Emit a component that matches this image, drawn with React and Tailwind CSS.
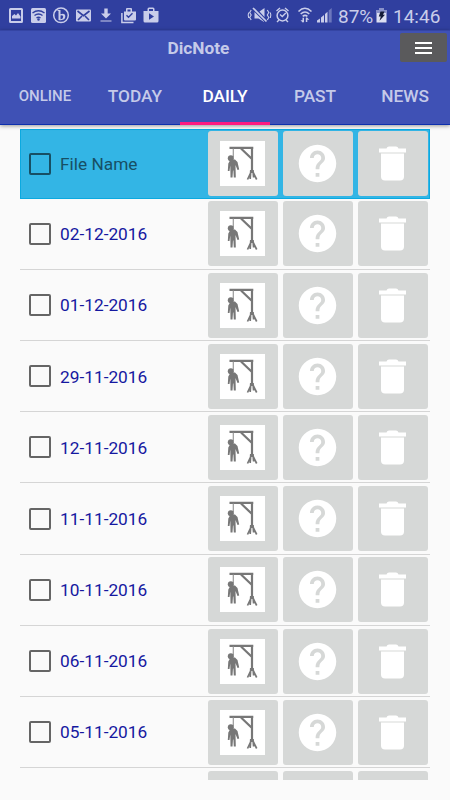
const dates = ['02-12-2016', '01-12-2016', '29-11-2016', '12-11-2016', '11-11-2016', '10-11-2016', '06-11-2016', '05-11-2016'];

function StatusIcons() {
  return (
    <svg className="block shrink-0" width="170" height="30" viewBox="0 0 170 30" fill="#c9cdea">
      <path fillRule="evenodd" d="M10.5 8h11q1.5 0 1.5 1.5v12q0 1.500-1.500 1.500h-11q-1.500 0-1.500-1.500v-12q0-1.500 1.500-1.500zM11 10v11h10v-11z" />
      <path d="M12 18.500v-2.500l2.500-2 1.500 1.500 2-2.500 2.500 3.500v2z" />
      <rect x="31" y="8" width="15" height="15" rx="1.500" />
      <g fill="none" stroke="#303f9f" strokeWidth="1.400">
        <path d="M32.500 13q6-4.500 12 0M34.500 15.500q4-3 8 0M36.500 18q2-1.500 4 0" />
      </g>
      <circle cx="38.500" cy="19.500" r="1.200" fill="#303f9f" />
      <circle cx="61" cy="15.300" r="7.300" fill="none" stroke="#c9cdea" strokeWidth="1.500" />
      <path fillRule="evenodd" d="M57.500 10h3v4.300q4.800-1.600 4.800 2.300 0 4.400-6.800 3.400v-9h-1zM60.500 15.500v3.700q2.700.2 2.700-2.400 0-2.200-2.700-1.300z" />
      <rect x="76" y="9.500" width="15" height="12" rx="1" />
      <path d="M77.500 11l6 4.700 6-4.700M78 20l4-4M89 20l-4-4" fill="none" stroke="#303f9f" strokeWidth="1.600" />
      <path d="M104.300 8.500h3.400v5h3.300l-5 5-5-5h3.300z" />
      <rect x="100.500" y="20" width="11" height="2" opacity=".5" />
      <path fillRule="evenodd" d="M124 11.500h2v-2.500q0-1 1-1h4q1 0 1 1v2.500h4v8q0 1-1 1h-10q-1 0-1-1zM127.500 11.500h3v-2h-3z" />
      <path d="M121.900 13v9.600h11.600" fill="none" stroke="#c9cdea" strokeWidth="1.500" />
      <path d="M126.500 15.300l2 2 4-4" fill="none" stroke="#303f9f" strokeWidth="1.400" />
      <path fillRule="evenodd" d="M143.500 11h4v-2q0-1.500 1.500-1.500h4q1.500 0 1.500 1.500v2h4v10q0 1.500-1.500 1.500h-12q-1.500 0-1.500-1.500zM149 11h4v-2h-4zM149 13.300v6.500l5-3.300z" />
    </svg>
  );
}

function SignalIcons() {
  return (
    <svg className="block shrink-0" width="88" height="30" viewBox="246 0 88 30" fill="#c9cdea">
      <path d="M254.500 12l9.500 9.500v0.500l-5.500-3.500h-4zM259.500 11.500l5-3.500v9z" />
      <g fill="none" stroke="#c9cdea" strokeWidth="1.300">
        <path d="M253 8l13.500 13.500" strokeWidth="1.700" />
        <path d="M251.200 10l-1.500 2.500 1.500 2.500-1.500 2.500 1.500 2.500M248.700 12.500l-.5 2.500.5 3M267.300 10l1.500 2.500-1.500 2.500 1.500 2.500-1.500 2.500M270.300 12.500l.5 2.500-.5 3" strokeWidth="1.100" />
        <circle cx="282.500" cy="15.500" r="5.400" strokeWidth="1.500" />
        <path d="M276.500 11l3.500-3M288.500 11l-3.500-3M279 20l-2 2M286 20l2 2M280 14.500l2.300 2 3.500-3.500" strokeWidth="1.400" />
        <path d="M298.500 11.500q6.300-6.500 13 0M300.700 14q4.300-4 8.600 0M302.700 16.300q2.300-2 4.700 0" strokeWidth="1.600" />
      </g>
      <path d="M300.500 20.300l2.500 2.500 1-1v-4h-1.500v2.500zM305.800 22v-4l1-.8 2.500 2.500h-2v2.300z" />
      <path d="M317 22.500v-2l3-2v4zM321 22.500v-5l3-2.500v7.500zM325 22.500v-8.500l2.500-2.300v10.800z" />
      <path d="M328.700 22.500v-12l3-2.500v14.500z" opacity=".4" />
    </svg>
  );
}

function Battery() {
  return (
    <svg className="ml-px block shrink-0" width="12" height="30" viewBox="0 0 12 30">
      <path d="M3.500 8h4v2h3v12.500h-10v-12.500h3z" fill="#dcdff2" />
      <path d="M3.500 8h4v2h3v3h-10v-3h3z" fill="#8992ca" />
      <path d="M4.500 11.500h4l-1.500 3.300h2l-5.500 6 1.300-4.300h-2z" fill="#151c38" />
    </svg>
  );
}

function Hangman() {
  return (
    <svg className="block" width="45" height="45" viewBox="0 0 45 45">
      <rect width="45" height="45" fill="#fff" />
      <path d="M9.500 6.800h23.800M32 6v26M21 7.500l11 10.500" fill="none" stroke="#777" strokeWidth="2.200" />
      <path d="M13.300 7.500v9" stroke="#999" strokeWidth="1.200" />
      <path d="M32 29l-4.500 9.500M32 29l4.700 9.500M30.800 29l-.6 9M33 29l.6 7.500" fill="none" stroke="#777" strokeWidth="1.700" />
      <circle cx="10.800" cy="17.300" r="3" fill="#777" />
      <path d="M10.500 18.500h4.500l2.500 2.500 1.700 7.500-1.700.5-2-5 .3 12.500h-2l-.4-7h-.4l-.5 7h-2l-.2-12-.8 5.500h-1.700l.5-7.500z" fill="#777" />
    </svg>
  );
}

function Question() {
  return (
    <svg className="block" width="45" height="45" viewBox="0 0 24 24" fill="#fff">
      <path d="M12 2C6.480 2 2 6.480 2 12s4.480 10 10 10 10-4.480 10-10S17.520 2 12 2zm1 17h-2v-2h2v2zm2.070-7.750l-.9.920C13.450 12.900 13 13.500 13 15h-2v-.5c0-1.100.45-2.100 1.170-2.830l1.240-1.260c.37-.36.590-.860.590-1.410 0-1.100-.9-2-2-2s-2 .9-2 2H8c0-2.210 1.790-4 4-4s4 1.790 4 4c0 .88-.36 1.680-.93 2.250z" />
    </svg>
  );
}

function Trash() {
  return (
    <svg className="block" width="45" height="45" viewBox="0 0 45 45" fill="#fff">
      <path d="M9 7.500h7.500q.6-2 2.500-2h7q1.900 0 2.500 2h7.500v4h-27z" />
      <path d="M11 12.500h23v23q0 4-4 4h-15q-4 0-4-4z" />
    </svg>
  );
}

function Actions() {
  const box = 'flex h-[65px] w-[70px] items-center justify-center rounded-[3px] bg-[#d6d8d7]';
  return (
    <div className="flex gap-[5px] pt-[2.700px]">
      <div className={box}><Hangman /></div>
      <div className={box}><Question /></div>
      <div className={box}><Trash /></div>
    </div>
  );
}

function Row({ label, header }) {
  return (
    <div className={header
      ? 'flex h-[70px] shrink-0 border border-[#0ba9e0] bg-[#33b5e5] text-[#174f64]'
      : 'flex h-[71.200px] shrink-0 border-b border-[#d5d5d5] text-[#1518a0]'}>
      <div className={header ? 'flex w-[186.500px] items-center pl-[8px]' : 'flex w-[187.500px] items-center pl-[9px]'}>
        <div className={header ? 'size-[22px] rounded-[2px] border-2 border-[#174f64]' : 'size-[22px] rounded-[2px] border-2 border-[#656565]'} />
        <span className="ml-[9px] pt-[2px] text-[17.300px] leading-none">{label}</span>
      </div>
      <div className={header ? '-mt-px' : ''}><Actions /></div>
    </div>
  );
}

export default function App() {
  return (
    <div className="flex h-[800px] w-[450px] flex-col overflow-hidden bg-[#fafafa] font-['Roboto',sans-serif]">
      <div className="flex h-[30px] shrink-0 items-center bg-[#303f9f] text-[#c9cdea]">
        <StatusIcons />
        <div className="ml-[76px] flex items-center">
          <SignalIcons />
          <span className="ml-[4px] w-[37px] pt-[2px] text-[19px] leading-none">87%</span>
          <Battery />
          <span className="ml-[5px] pt-[2px] text-[19px] leading-none">14:46</span>
        </div>
      </div>
      <header className="relative z-10 flex h-[95px] shrink-0 flex-col border-b border-[#0d2fae] bg-[#3f51b5] shadow-[0_1px_4px_rgba(0,0,0,0.4)]">
        <div className="flex h-[35px] items-start justify-between border-t border-[#3545a4] pl-[167.500px] pr-[2.500px]">
          <h1 className="mt-[7px] text-[17.300px] font-bold leading-[20px] text-[#c5cae9]">DicNote</h1>
          <div className="mt-[2px] flex h-[29px] w-[47px] -translate-x-px flex-col items-center justify-center gap-[3px] rounded-[2px] bg-[#5a5a5c]">
            <i className="h-[2px] w-[17px] bg-white" />
            <i className="h-[2px] w-[17px] bg-white" />
            <i className="h-[2px] w-[17px] bg-white" />
          </div>
        </div>
        <nav className="grid flex-1 grid-cols-5 text-[17.300px] font-medium leading-none text-[#c5cae9]">
          <span className="flex items-center justify-center pt-[3px] text-[15px]">ONLINE</span>
          <span className="flex items-center justify-center pt-[4px]">TODAY</span>
          <span className="-mb-px flex items-center justify-center border-b-[3px] border-[#ff1b80] pt-[6px] text-white">DAILY</span>
          <span className="flex items-center justify-center pt-[4px]">PAST</span>
          <span className="flex items-center justify-center pt-[4px]">NEWS</span>
        </nav>
      </header>
      <main className="mx-[20px] mt-[3.700px] flex h-[651px] shrink-0 flex-col overflow-hidden">
        <Row label="File Name" header />
        {dates.map((date) => <Row key={date} label={date} />)}
        <Row label="" />
      </main>
    </div>
  );
}
